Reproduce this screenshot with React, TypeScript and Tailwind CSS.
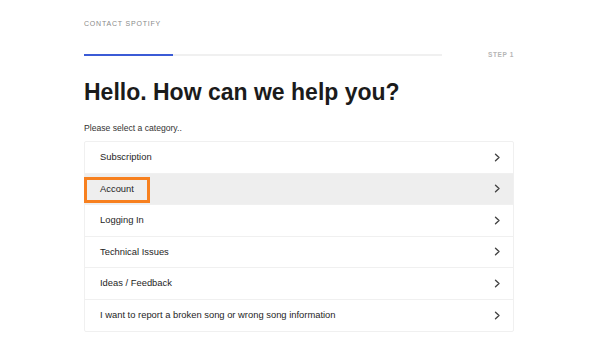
import React from "react";

const categories = [
  "Subscription",
  "Account",
  "Logging In",
  "Technical Issues",
  "Ideas / Feedback",
  "I want to report a broken song or wrong song information",
];

function Chevron() {
  return (
    <svg width="7" height="9" viewBox="0 0 7 9" fill="none">
      <polyline
        points="1.5,1.2 5,4.5 1.5,7.8"
        stroke="#444"
        strokeWidth="1.4"
        strokeLinecap="round"
        strokeLinejoin="round"
      />
    </svg>
  );
}

export default function App() {
  return (
    <div
      className="w-[610px] h-[364px] bg-white overflow-hidden"
      style={{ fontFamily: '"Liberation Sans", Arial, sans-serif' }}
    >
      <div className="ml-[84px] w-[430px] flex flex-col">
        {/* header */}
        <div className="pt-[20px] h-[28px] text-[7px] leading-[8px] tracking-[0.8px] text-[#8a8a8a]">
          CONTACT SPOTIFY
        </div>

        {/* progress */}
        <div className="mt-[25px] flex items-center h-[4px]">
          <div className="w-[358px] h-[2px] bg-[#f0f0f0] flex">
            <div className="w-[89px] h-[2px] bg-[#3b5bd6]" />
          </div>
          <div className="ml-auto text-[6.5px] leading-[8px] font-bold tracking-[0.6px] text-[#b5b5b5]">
            STEP 1
          </div>
        </div>

        {/* heading */}
        <h1 className="mt-[21px] text-[23px] leading-[28px] font-bold text-[#1b1b1b]">
          Hello. How can we help you?
        </h1>

        <p className="mt-[17px] text-[8.6px] leading-[10px] text-[#333]">
          Please select a category..
        </p>

        {/* list */}
        <div className="mt-[8px] border border-[#f0f0f0] rounded-[2px] flex flex-col">
          {categories.map((c, i) => (
            <div
              key={c}
              className={`relative h-[31.5px] flex items-center pl-[15px] pr-[12px] ${
                i < categories.length - 1 ? "border-b border-[#f0f0f0]" : ""
              } ${c === "Account" ? "bg-[#eeeeee]" : ""}`}
            >
              <span className="text-[9.4px] text-[#1e1e1e]">{c}</span>
              <span className="ml-auto flex">
                <Chevron />
              </span>
              {c === "Account" && (
                <div className="absolute left-[-1px] top-[3.5px] w-[66px] h-[26px] border-[3px] border-[#f7801f]" />
              )}
            </div>
          ))}
        </div>
      </div>
    </div>
  );
}
